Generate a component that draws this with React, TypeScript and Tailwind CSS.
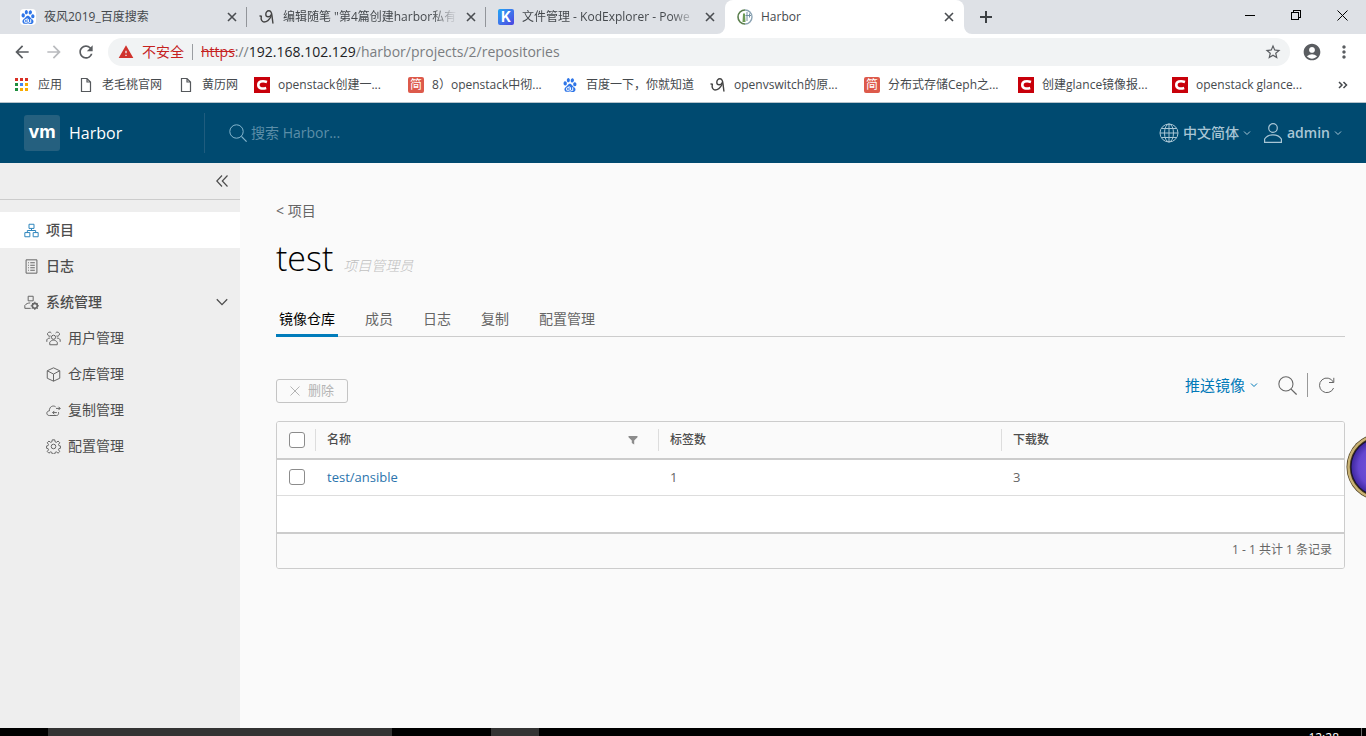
import type { ReactNode } from "react";
import { SiBaidu } from "react-icons/si";
import {
  MdAccountCircle,
  MdArrowBack,
  MdArrowForward,
  MdMoreVert,
  MdRefresh,
  MdStarBorder,
  MdWarning,
} from "react-icons/md";

export default function App() {
  return (
    <div className="flex h-screen flex-col overflow-hidden bg-white font-['Open_Sans','Noto_Sans_CJK_SC',sans-serif]">
      <TabStrip />
      <Toolbar />
      <BookmarksBar />
      <HarborHeader />
      <div className="relative flex min-h-0 flex-1 overflow-hidden">
        <Sidebar />
        <ProjectPage />
        <FloatingOrb />
      </div>
      <Taskbar />
    </div>
  );
}

/* ---------- browser chrome ---------- */

function TabStrip() {
  return (
    <div className="flex h-[34px] shrink-0 bg-[#dee1e6] pl-2 text-xs text-[#45494d]">
      {tabs.map((tab) => (
        <div
          key={tab.title}
          className={
            tab.active
              ? "relative flex w-[239px] items-center gap-2 rounded-t-lg bg-white pr-[10px] pl-3"
              : "relative flex w-[239px] items-center gap-2 pr-[10px] pl-3"
          }
        >
          {tab.active && (
            <>
              <svg className="absolute bottom-0 -left-2 size-2" viewBox="0 0 8 8" aria-hidden="true">
                <path d="M8 0v8H0a8 8 0 0 0 8-8z" fill="#fff" />
              </svg>
              <svg className="absolute -right-2 bottom-0 size-2" viewBox="0 0 8 8" aria-hidden="true">
                <path d="M0 0v8h8a8 8 0 0 1-8-8z" fill="#fff" />
              </svg>
            </>
          )}
          <tab.icon />
          <span
            className={
              tab.long
                ? "flex-1 overflow-hidden mask-r-from-85% whitespace-nowrap"
                : "flex-1 overflow-hidden whitespace-nowrap"
            }
          >
            {tab.title}
          </span>
          <button type="button" aria-label="关闭标签页">
            <svg className="size-[10px]" viewBox="0 0 10 10" stroke="#4a4d51" strokeWidth="1.6">
              <path d="M1 1l8 8M9 1L1 9" />
            </svg>
          </button>
          {tab.divider && <span className="absolute right-0 h-5 w-px bg-[#92959a]" />}
        </div>
      ))}
      <button type="button" aria-label="打开新的标签页" className="ml-4 flex items-center">
        <svg className="size-3" viewBox="0 0 12 12" stroke="#3c4043" strokeWidth="2">
          <path d="M6 0v12M0 6h12" />
        </svg>
      </button>
      <div className="mb-1 ml-auto flex items-center gap-9 pr-[18px]">
        <button type="button" aria-label="最小化">
          <svg className="size-[10px]" viewBox="0 0 10 10" stroke="#000" shapeRendering="crispEdges">
            <path d="M0 5.5h10" />
          </svg>
        </button>
        <button type="button" aria-label="还原">
          <svg className="size-[10px]" viewBox="0 0 10 10" fill="none" stroke="#000" shapeRendering="crispEdges">
            <path d="M.5 2.5h7v7h-7zM2.5 2V.5h7v7H8" />
          </svg>
        </button>
        <button type="button" aria-label="关闭">
          <svg className="size-[11px]" viewBox="0 0 11 11" stroke="#000">
            <path d="M.5.5l10 10M10.5.5l-10 10" />
          </svg>
        </button>
      </div>
    </div>
  );
}

function Toolbar() {
  return (
    <div className="flex h-9 shrink-0 items-center px-3 text-[#5a5d61]">
      <button type="button" aria-label="后退">
        <MdArrowBack className="size-5" />
      </button>
      <button type="button" aria-label="前进" className="ml-3 text-[#b9bbbe]">
        <MdArrowForward className="size-5" />
      </button>
      <button type="button" aria-label="重新加载" className="ml-3">
        <MdRefresh className="size-5" />
      </button>
      <div className="ml-3 flex h-7 flex-1 items-center rounded-full bg-[#f1f3f4] pr-2 pl-[10px] text-sm">
        <MdWarning className="size-4 text-[#d0322c]" />
        <span className="ml-2 text-[#c5221f]">不安全</span>
        <span className="mx-2 h-4 w-px bg-[#9a9da1]" />
        <span className="flex-1 text-[#7a7d81]">
          <span className="text-[#c5221f] line-through">https</span>://
          <span className="text-[#202124]">192.168.102.129</span>
          /harbor/projects/2/repositories
        </span>
        <button type="button" aria-label="为此网页添加书签">
          <MdStarBorder className="size-[18px]" />
        </button>
      </div>
      <MdAccountCircle className="ml-3 size-5" />
      <button type="button" aria-label="自定义及控制" className="ml-3">
        <MdMoreVert className="size-5" />
      </button>
    </div>
  );
}

function BookmarksBar() {
  return (
    <div className="flex h-[33px] shrink-0 items-center gap-4 border-b border-[#b6c3cb] pr-[18px] pb-[3px] pl-[14px] text-xs whitespace-nowrap text-[#45494d]">
      {bookmarks.map((bookmark) => (
        <a key={bookmark.title} href="#" className="flex items-center gap-2">
          <bookmark.icon />
          <span className={bookmark.title.endsWith("...") ? "w-[114px]" : ""}>
            {bookmark.title}
          </span>
        </a>
      ))}
      <button type="button" aria-label="更多书签" className="ml-auto">
        <svg className="size-[10px]" viewBox="0 0 10 10" fill="none" stroke="currentColor" strokeWidth="1.5">
          <path d="M1 2l3 3-3 3M5.500 2l3 3-3 3" />
        </svg>
      </button>
    </div>
  );
}

function Taskbar() {
  return (
    <div className="flex h-2 shrink-0 overflow-hidden bg-black">
      <span className="ml-12 w-[344px] bg-[#333]" />
      <span className="ml-[99px] w-12 bg-[#333]" />
      <span className="ml-auto pt-[2px] pr-[22px] text-xs leading-4 text-white">12:28</span>
      <span className="mr-1 w-px bg-[#6b6b6b]" />
    </div>
  );
}

/* ---------- Harbor ---------- */

function HarborHeader() {
  return (
    <header className="flex h-[60px] shrink-0 items-center bg-[#004a70] px-6 text-[#a9c6d5]">
      <a href="#" className="flex h-10 w-[181px] items-center gap-[9px] border-r border-[#1f5c7e] text-white">
        <span className="flex size-9 items-center justify-center rounded-[3px] bg-[#25607f] pb-[2px] font-['Inter',sans-serif] text-lg leading-6 font-bold">
          vm
        </span>
        <span className="text-base">Harbor</span>
      </a>
      <label className="ml-6 flex flex-1 items-center gap-1">
        <SearchIcon className="size-[18px] text-[#85b5cd]" />
        <input
          type="text"
          aria-label="搜索"
          placeholder="搜索 Harbor..."
          className="w-60 text-sm outline-none placeholder:text-[#5c8ea8]"
        />
      </label>
      <button type="button" className="flex items-center gap-1 text-sm font-medium">
        <svg className="size-5" viewBox="0 0 20 20" fill="none" stroke="currentColor">
          <circle cx="10" cy="10" r="9" />
          <ellipse cx="10" cy="10" rx="4.5" ry="9" />
          <path d="M10 1v18M1 10h18M2.5 5.5h15M2.5 14.5h15" />
        </svg>
        中文简体
        <Caret />
      </button>
      <button type="button" className="ml-3 flex items-center gap-1 text-sm font-semibold">
        <svg className="size-5" viewBox="0 0 20 20" fill="none" stroke="currentColor" strokeWidth="1.2">
          <circle cx="10" cy="5" r="4.3" />
          <path d="M1.600 19.300v-3.300c1.800-2.800 5-4.200 8.400-4.200s6.600 1.400 8.400 4.200v3.300z" />
        </svg>
        admin
        <Caret />
      </button>
    </header>
  );
}

function Sidebar() {
  return (
    <nav className="w-60 shrink-0 bg-[#eee] text-sm text-[#4d4d4d]">
      <div className="flex h-[37px] items-center justify-end border-b border-[#ccc] pr-3">
        <button type="button" aria-label="收起">
          <svg className="size-3" viewBox="0 0 12 12" fill="none" stroke="currentColor" strokeWidth="1.2">
            <path d="M6 .5L.8 6 6 11.500M11.500.5L6.300 6l5.200 5.500" />
          </svg>
        </button>
      </div>
      <ul className="mt-3">
        {navItems.map((item) => (
          <li key={item.label}>
            <a
              href="#"
              className={
                item.active
                  ? "flex h-9 items-center gap-[7px] bg-white pr-3 pl-6 font-medium"
                  : item.nested
                    ? "flex h-9 items-center gap-[7px] pr-3 pl-[46px]"
                    : "flex h-9 items-center gap-[7px] pr-3 pl-6 font-medium"
              }
            >
              <svg
                className={item.active ? "size-[15px] text-[#2f86bd]" : "size-[15px] text-[#666]"}
                viewBox="0 0 36 36"
                fill="none"
                stroke="currentColor"
                strokeWidth="2.4"
                strokeLinejoin="round"
                aria-hidden="true"
              >
                {item.icon}
              </svg>
              {item.label}
              {item.expandable && (
                <svg className="ml-auto size-3" viewBox="0 0 12 12" fill="none" stroke="currentColor" strokeWidth="1.3">
                  <path d="M.8 3.200L6 8.600l5.200-5.400" />
                </svg>
              )}
            </a>
          </li>
        ))}
      </ul>
    </nav>
  );
}

function ProjectPage() {
  return (
    <main className="flex-1 bg-[#fafafa] pt-[37px] pr-[21px] pl-9 text-[#666]">
      <a href="#" className="block text-sm leading-[22px]">
        &lt; 项目
      </a>
      <h1 className="mt-4 text-[34px] leading-10 font-light text-black">
        test
        <span className="ml-[10px] text-sm text-[#c0c0c0] italic">项目管理员</span>
      </h1>
      <div className="mt-6 flex h-[35px] gap-6 border-b border-[#ccc]">
        {projectTabs.map((tab, i) => (
          <button
            key={tab}
            type="button"
            className={
              i === 0
                ? "-mb-px border-b-[3px] border-[#007cbb] px-[3px] pt-px text-sm text-black"
                : "-mb-px border-b-[3px] border-transparent px-[3px] pt-px text-sm"
            }
          >
            {tab}
          </button>
        ))}
      </div>

      <div className="mt-9 flex items-center justify-between">
        <button
          type="button"
          disabled
          className="mt-[6px] flex h-6 w-[72px] items-center justify-center gap-2 rounded-[3px] border border-[#c4c4c4] text-[13px] text-[#b4b4b4]"
        >
          <svg className="size-[10px]" viewBox="0 0 10 10" stroke="currentColor">
            <path d="M.5.5l9 9M9.500.5l-9 9" />
          </svg>
          删除
        </button>
        <div className="mb-[6px] flex items-center">
          <button type="button" className="flex items-center gap-[5px] text-[15px] leading-6 text-[#0079b8]">
            推送镜像
            <Caret />
          </button>
          <button type="button" aria-label="搜索" className="ml-5">
            <SearchIcon className="size-[19px]" />
          </button>
          <span className="mx-[10px] h-6 w-px bg-[#999]" />
          <button type="button" aria-label="刷新" className="mr-[10px]">
            <svg className="size-[17px]" viewBox="0 0 17 17" fill="none" stroke="currentColor">
              <path d="M15.300 5A7.300 7.300 0 1 0 15.600 11M15.800.8v4.700H11" />
            </svg>
          </button>
        </div>
      </div>

      <div className="mt-[18px] overflow-hidden rounded-[3px] border border-[#ccc] bg-white">
        <table className="w-full table-fixed text-left">
          <colgroup>
            <col className="w-[38px]" />
            <col />
            <col />
            <col />
          </colgroup>
          <thead>
            <tr className="h-[37px] border-b-2 border-[#ccc] bg-[#fafafa] text-xs text-[#4d4d4d]">
              <th className="pl-3">
                <Checkbox label="全选" />
              </th>
              <HeaderCell>
                名称
                <button type="button" aria-label="筛选" className="mr-5">
                  <svg className="size-[10px]" viewBox="0 0 10 10" fill="#8c8c8c">
                    <path d="M.5 1h9v1.200L6.200 5.500V9.500L3.800 8V5.500L.5 2.200z" />
                  </svg>
                </button>
              </HeaderCell>
              <HeaderCell>标签数</HeaderCell>
              <HeaderCell>下载数</HeaderCell>
            </tr>
          </thead>
          <tbody>
            <tr className="h-9 border-b border-[#ddd] text-[13px]">
              <td className="pl-3">
                <Checkbox label="选择 test/ansible" />
              </td>
              <td className="pl-3">
                <a href="#" className="text-[#2b74ad]">
                  test/ansible
                </a>
              </td>
              <td className="pl-3">1</td>
              <td className="pl-3">3</td>
            </tr>
          </tbody>
        </table>
        <div className="mt-9 flex h-9 items-center justify-end border-t-2 border-[#ccc] bg-[#fafafa] pr-3 pb-[2px] text-xs">
          1 - 1 共计 1 条记录
        </div>
      </div>
    </main>
  );
}

function HeaderCell({ children }: { children: ReactNode }) {
  return (
    <th className="font-medium">
      <div className="flex h-[22px] items-center justify-between border-l border-[#ddd] pl-[11px]">
        {children}
      </div>
    </th>
  );
}

function Checkbox({ label }: { label: string }) {
  return (
    <input
      type="checkbox"
      aria-label={label}
      className="block size-4 appearance-none rounded-[3px] border border-[#8c8c8c] bg-white"
    />
  );
}

function SearchIcon({ className }: { className: string }) {
  return (
    <svg className={className} viewBox="0 0 18 18" fill="none" stroke="currentColor" aria-hidden="true">
      <circle cx="7.500" cy="7.500" r="6.700" />
      <path d="M12.400 12.400l5.200 5.200" strokeWidth="1.2" />
    </svg>
  );
}

function Caret() {
  return (
    <svg className="size-2" viewBox="0 0 8 8" fill="none" stroke="currentColor" aria-hidden="true">
      <path d="M1 2.500l3 3 3-3" />
    </svg>
  );
}

// desktop widget docked at the right edge of the screen
function FloatingOrb() {
  return (
    <svg className="absolute top-[270px] -right-12 size-[68px]" viewBox="0 0 68 68" aria-hidden="true">
      <defs>
        <radialGradient id="orb" cx="0.5" cy="0.5" r="0.5">
          <stop offset="0" stopColor="#7b5ce0" />
          <stop offset="0.75" stopColor="#6446d0" />
          <stop offset="1" stopColor="#4029a0" />
        </radialGradient>
      </defs>
      <circle cx="34" cy="34" r="33.500" fill="#4a3c20" />
      <circle cx="34" cy="34" r="31.500" fill="none" stroke="#c9b274" strokeWidth="2.500" />
      <circle cx="34" cy="34" r="29.500" fill="#17102e" />
      <circle cx="34" cy="34" r="28.500" fill="url(#orb)" />
    </svg>
  );
}

/* ---------- site icons ---------- */

function BaiduIcon() {
  return <SiBaidu className="size-4 shrink-0 rounded-sm bg-white p-px text-[#2f76e8]" />;
}

function CnblogsIcon() {
  return (
    <svg className="size-4 shrink-0" viewBox="0 0 16 16" fill="none" stroke="#444" strokeWidth="1.4" strokeLinecap="round">
      <path d="M1 7l1.300.3c-.6 3 .5 5.700 2.700 5.700 2.800 0 5.500-2.500 7-5.500" />
      <path d="M12.300 5.500c-.6 1.500-1.800 2.300-3.100 2.300S6.800 6.800 6.800 5.200 8 1.800 9.800 1.800c2.200 0 2.900 1.700 3.200 5l.9 7.200" />
    </svg>
  );
}

function KodIcon() {
  return (
    <span className="flex size-4 shrink-0 items-center justify-center rounded-xs bg-linear-to-br from-[#15a5f5] to-[#4a3fe0] font-['Inter',sans-serif] text-sm leading-4 font-bold text-white">
      K
    </span>
  );
}

function HarborIcon() {
  return (
    <svg className="size-4 shrink-0" viewBox="0 0 16 16" fill="none">
      <path d="M8 1a7 7 0 1 0 0 14" stroke="#5b7f4d" strokeWidth="1.6" />
      <path d="M8 1a7 7 0 0 1 0 14" stroke="#8ba3b3" strokeWidth="1.4" />
      <path d="M6 4.500h2L8.500 13H5.500z" fill="#6c9a55" />
      <path d="M10 3v9M12.500 4.500v4M8.500 6.500H14" stroke="#7391a5" />
    </svg>
  );
}

function AppsIcon() {
  return (
    <svg className="size-4 shrink-0" viewBox="0 0 16 16" shapeRendering="crispEdges">
      {appDots.map((color, i) => (
        <rect key={i} x={1 + (i % 3) * 5} y={1 + Math.floor(i / 3) * 5} width="3" height="3" fill={color} />
      ))}
    </svg>
  );
}

function FileIcon() {
  return (
    <svg className="size-4 shrink-0" viewBox="0 0 16 16" fill="none" stroke="#55585c" strokeWidth="1.2">
      <path d="M3.500 1.500h5.500l3.500 3.500v9.500h-9zM9 1.500V5h3.500" />
    </svg>
  );
}

function CsdnIcon() {
  return (
    <svg className="size-4 shrink-0" viewBox="0 0 16 16">
      <rect width="16" height="16" fill="#c8000a" />
      <path d="M13 5c-5-1.800-8.700-.3-8.700 3s3.500 4.300 7.900 3" fill="none" stroke="#fff" strokeWidth="2.6" />
    </svg>
  );
}

function JianshuIcon() {
  return (
    <span className="flex size-4 shrink-0 items-center justify-center rounded-xs bg-[#dd5a4b] text-xs leading-4 text-white">
      简
    </span>
  );
}

const tabs = [
  { title: "夜风2019_百度搜索", icon: BaiduIcon, divider: true },
  { title: "编辑随笔 \"第4篇创建harbor私有", icon: CnblogsIcon, divider: true, long: true },
  { title: "文件管理 - KodExplorer - Powe", icon: KodIcon, long: true },
  { title: "Harbor", icon: HarborIcon, active: true },
];

const bookmarks = [
  { title: "应用", icon: AppsIcon },
  { title: "老毛桃官网", icon: FileIcon },
  { title: "黄历网", icon: FileIcon },
  { title: "openstack创建一...", icon: CsdnIcon },
  { title: "8）openstack中彻...", icon: JianshuIcon },
  { title: "百度一下，你就知道", icon: BaiduIcon },
  { title: "openvswitch的原...", icon: CnblogsIcon },
  { title: "分布式存储Ceph之...", icon: JianshuIcon },
  { title: "创建glance镜像报...", icon: CsdnIcon },
  { title: "openstack glance...", icon: CsdnIcon },
];

const appDots = [
  "#d93025", "#d93025", "#d93025",
  "#1e8e3e", "#4285f4", "#f9ab00",
  "#1e8e3e", "#f9ab00", "#f9ab00",
];

const projectTabs = ["镜像仓库", "成员", "日志", "复制", "配置管理"];

const navItems = [
  {
    label: "项目",
    active: true,
    icon: <path d="M12 3h12v10H12zM2 23h12v10H2zM22 23h12v10H22zM18 13v5M8 23v-5h20v5" />,
  },
  {
    label: "日志",
    icon: <path d="M5 2h26v32H5zM10 9h2M15 9h11M10 15h2M15 15h11M10 21h2M15 21h11M10 27h2M15 27h11" />,
  },
  {
    label: "系统管理",
    expandable: true,
    icon: (
      <>
        <path d="M10 3h12v11H10zM16 32H2v-7c3-4 8-6 13-6" />
        <circle cx="26" cy="26" r="6" strokeWidth="4" />
        <path d="M26 16v4M26 32v4M16 26h4M32 26h4M19 19l3 3M30 30l3 3M33 19l-3 3M22 30l-3 3" />
      </>
    ),
  },
  {
    label: "用户管理",
    nested: true,
    icon: (
      <>
        <circle cx="18" cy="15" r="5" />
        <path d="M9 33v-6c2-3 5-5 9-5s7 2 9 5v6z" />
        <path d="M11 12a5 5 0 1 1 2-7M25 12a5 5 0 1 0-2-7M2 26v-5c2-3 4-4 8-4M34 26v-5c-2-3-4-4-8-4" />
      </>
    ),
  },
  {
    label: "仓库管理",
    nested: true,
    icon: <path d="M18 2l15 7v18l-15 7-15-7V9zM3 9l15 8 15-8M18 17v17" />,
  },
  {
    label: "复制管理",
    nested: true,
    icon: (
      <path d="M30 22c1 5-1 8-5 8H8c-8 0-8-11 0-11C8 8 17 5 23 9M34 13H24M30 9l4 4-4 4M16 23h10M20 19l-4 4 4 4" />
    ),
  },
  {
    label: "配置管理",
    nested: true,
    icon: (
      <>
        <path d="M15 2h6l1 5 3 1 4-3 4 4-3 4 1 3 4 1v5l-4 1-1 3 3 4-4 4-4-3-3 1-1 4h-6l-1-4-3-1-4 3-4-4 3-4-1-3-4-1v-5l4-1 1-3-3-4 4-4 4 3 3-1z" />
        <circle cx="18" cy="18" r="5.500" />
      </>
    ),
  },
];
